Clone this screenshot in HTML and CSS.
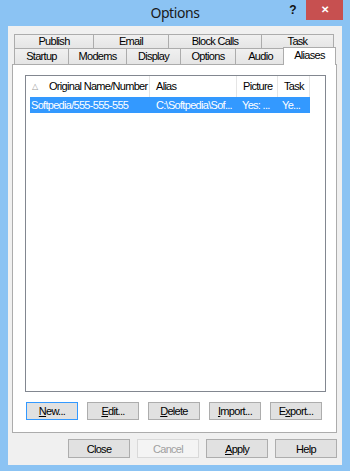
FILE: index.html
```html
<!DOCTYPE html>
<html>
<head>
    <meta charset="UTF-8">
    <title>Options</title>
    <link rel="stylesheet" href="styles.css">
</head>
<body>
    <div class="window">
        <div class="titlebar">
            <div></div>
            <div class="title">Options</div>
            <div class="caption-btns">
                <span class="help-btn">?</span>
                <span class="close-btn">&#x2715;</span>
            </div>
        </div>
        <div class="dialog">
            <div class="tab-row back">
                <div class="tab">Publish</div>
                <div class="tab">Email</div>
                <div class="tab">Block Calls</div>
                <div class="tab">Task</div>
            </div>
            <div class="tab-row front">
                <div class="tab">Startup</div>
                <div class="tab">Modems</div>
                <div class="tab">Display</div>
                <div class="tab">Options</div>
                <div class="tab">Audio</div>
                <div class="tab selected">Aliases</div>
            </div>
            <div class="tab-page">
                <div class="listview">
                    <div class="lv-header">
                        <div class="col c-name"><span class="sort">&#x25B3;</span>Original Name/Number</div>
                        <div class="col c-alias">Alias</div>
                        <div class="col c-pic">Picture</div>
                        <div class="col c-task">Task</div>
                    </div>
                    <div class="lv-row selected">
                        <div class="cell c-name">Softpedia/555-555-555</div>
                        <div class="cell c-alias">C:\Softpedia\Sof...</div>
                        <div class="cell c-pic">Yes: ...</div>
                        <div class="cell c-task">Ye...</div>
                    </div>
                </div>
                <div class="alias-btns">
                    <button class="btn default"><u>N</u>ew...</button>
                    <button class="btn"><u>E</u>dit...</button>
                    <button class="btn"><u>D</u>elete</button>
                    <button class="btn"><u>I</u>mport...</button>
                    <button class="btn">E<u>x</u>port...</button>
                </div>
            </div>
            <div class="dialog-btns">
                <button class="btn wide">Close</button>
                <button class="btn wide" disabled>Cancel</button>
                <button class="btn wide"><u>A</u>pply</button>
                <button class="btn wide">Help</button>
            </div>
        </div>
    </div>
</body>
</html>
```

FILE: styles.css
```css
* {
    box-sizing: border-box;
}

body {
    margin: 0;
    background-color: #8bc3f3;
    font-family: "Liberation Sans", Arial, sans-serif;
    font-size: 11px;
    letter-spacing: -0.7px;
    color: #000;
}

.window {
    width: 350px;
    height: 471px;
    background-color: #8bc3f3;
    display: flex;
    flex-direction: column;
}

/* title bar */
.titlebar {
    height: 26px;
    display: grid;
    grid-template-columns: 1fr auto 1fr;
    align-items: start;
}

.title {
    font-family: "Noto Sans", sans-serif;
    font-size: 14px;
    letter-spacing: -0.4px;
    color: #1a1a1a;
    line-height: 26px;
}

.caption-btns {
    display: flex;
    justify-content: flex-end;
    padding-right: 7px;
}

.help-btn {
    width: 26px;
    height: 20px;
    text-align: center;
    font-family: "Liberation Sans", sans-serif;
    font-weight: 700;
    font-size: 12px;
    letter-spacing: 0;
    line-height: 20px;
    color: #111;
}

.close-btn {
    width: 37px;
    height: 20px;
    background-color: #c75050;
    color: #fff;
    text-align: center;
    font-size: 10px;
    font-weight: 700;
    letter-spacing: 0;
    line-height: 20px;
}

/* dialog body */
.dialog {
    height: 439px;
    margin: 0 8px;
    background-color: #f0f0f0;
    padding: 8px 5px 7px 4px;
    display: flex;
    flex-direction: column;
}

.tab-row {
    display: grid;
    padding-left: 2px;
}

.tab-row.back {
    grid-template-columns: 79px 75px 93px 73px;
    height: 14px;
}

.tab-row.front {
    grid-template-columns: 54px 58px 54px 55px 50px 49px;
    height: 16px;
}

.tab {
    border: 1px solid #acacac;
    border-right: none;
    border-bottom: none;
    background-image: linear-gradient(180deg, #f0f0f0 0%, #e5e5e5 100%);
    text-align: center;
    line-height: 15px;
    white-space: nowrap;
}

.tab-row.back .tab {
    line-height: 13px;
}

.tab:last-child {
    border-right: 1px solid #acacac;
}

.tab.selected {
    position: relative;
    z-index: 1;
    margin: -1px -2px -1px -2px;
    background: #fff;
    line-height: 15px;
}

.tab-page {
    height: 369px;
    background-color: #fff;
    border: 1px solid #acacac;
    padding: 10px 10px 0 12px;
    display: flex;
    flex-direction: column;
}

/* list view */
.listview {
    width: 301px;
    height: 317px;
    border: 1px solid #828790;
    background-color: #fff;
}

.lv-header {
    display: flex;
    height: 21px;
}

.col {
    border-right: 1px solid #e5e5e5;
    line-height: 20px;
    padding-left: 6px;
    white-space: nowrap;
    overflow: hidden;
}

.c-name {
    width: 124px;
}

.c-alias {
    width: 87px;
}

.c-pic {
    width: 41px;
}

.c-task {
    width: 32px;
}

.sort {
    display: inline-block;
    width: 17px;
    color: #9a9a9a;
    font-size: 8px;
    letter-spacing: 0;
    vertical-align: 1px;
}

.lv-row {
    display: flex;
    height: 16px;
    margin-left: 4px;
    width: 280px;
    line-height: 16px;
}

.lv-row.selected {
    background-color: #3399ff;
    color: #fff;
}

.cell {
    white-space: nowrap;
    overflow: hidden;
}

.cell.c-name {
    width: 120px;
    padding-left: 1px;
}

.cell.c-alias {
    padding-left: 6px;
}

.cell.c-pic {
    padding-left: 5px;
}

.cell.c-task {
    padding-left: 4px;
}

/* buttons */
.btn {
    font-family: inherit;
    font-size: 11px;
    letter-spacing: -0.7px;
    color: #000;
    background-color: #e1e1e1;
    border: 1px solid #adadad;
    padding: 0;
    height: 18px;
    line-height: 16px;
}

.btn.default {
    border-color: #3399ff;
}

.btn:disabled {
    background-color: #f4f4f4;
    border-color: #d9d9d9;
    color: #a0a0a0;
}

.alias-btns {
    display: flex;
    gap: 9px;
    margin-top: 10px;
    margin-left: 1px;
}

.alias-btns .btn {
    width: 52px;
}

.dialog-btns {
    display: flex;
    justify-content: flex-end;
    gap: 7px;
    margin-top: 6px;
}

.btn.wide {
    width: 62px;
    height: 19px;
}
```
